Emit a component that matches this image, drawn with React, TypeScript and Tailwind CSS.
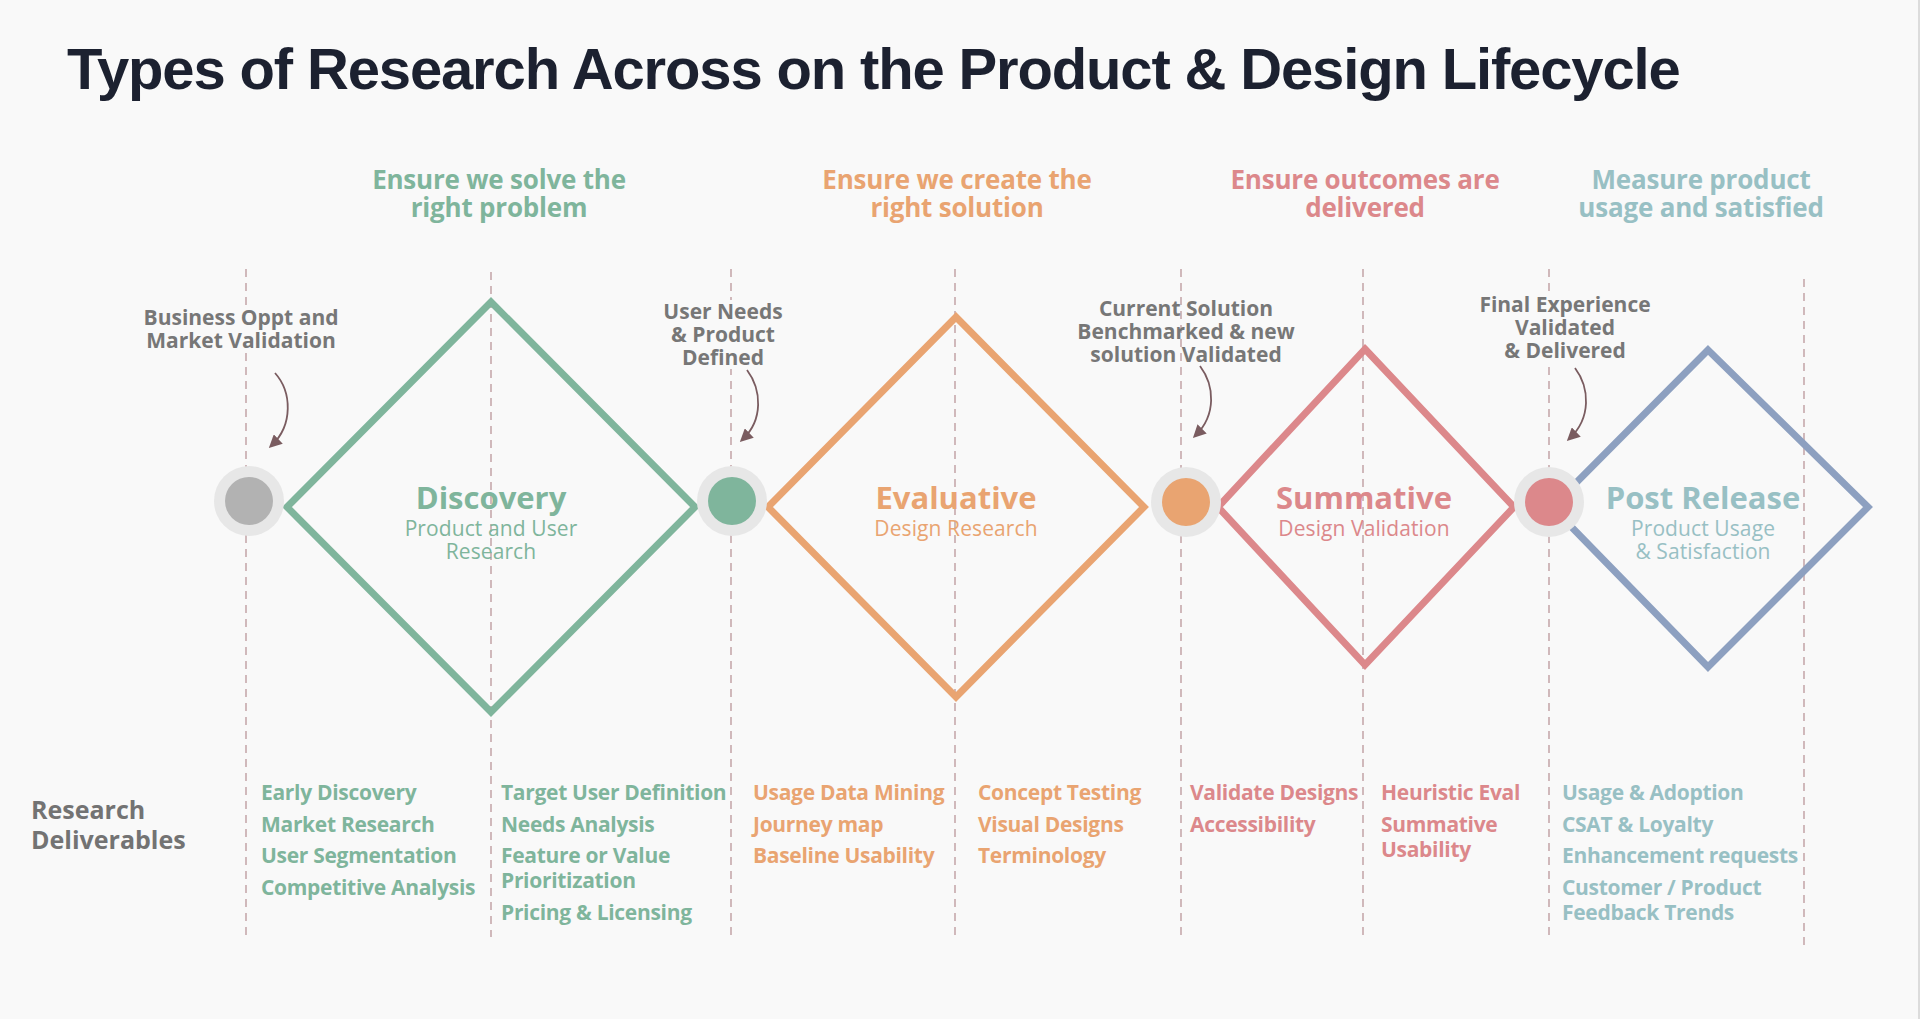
import React from "react";

const OFF = 98;

type Tone = "green" | "orange" | "pink" | "teal";

const toneText: Record<Tone, string> = {
  green: "text-[#7fb59c]",
  orange: "text-[#e9a471]",
  pink: "text-[#dc888b]",
  teal: "text-[#98c0c4]",
};

const headings: { cx: number; lines: string[]; tone: Tone }[] = [
  { cx: 499, lines: ["Ensure we solve the", "right problem"], tone: "green" },
  { cx: 957, lines: ["Ensure we create the", "right solution"], tone: "orange" },
  { cx: 1365, lines: ["Ensure outcomes are", "delivered"], tone: "pink" },
  { cx: 1701, lines: ["Measure product", "usage and satisfied"], tone: "teal" },
];

const milestones: { cx: number; top: number; lines: string[]; bg: boolean }[] = [
  { cx: 241, top: 306, lines: ["Business Oppt and", "Market Validation"], bg: true },
  { cx: 723, top: 300, lines: ["User Needs", "& Product", "Defined"], bg: true },
  { cx: 1186, top: 297, lines: ["Current Solution", "Benchmarked & new", "solution Validated"], bg: false },
  { cx: 1565, top: 293, lines: ["Final Experience", "Validated", "& Delivered"], bg: true },
];

const phases: { cx: number; title: string; sub: string[]; tone: Tone }[] = [
  { cx: 491, title: "Discovery", sub: ["Product and User", "Research"], tone: "green" },
  { cx: 956, title: "Evaluative", sub: ["Design Research"], tone: "orange" },
  { cx: 1364, title: "Summative", sub: ["Design Validation"], tone: "pink" },
  { cx: 1703, title: "Post Release", sub: ["Product Usage", "& Satisfaction"], tone: "teal" },
];

const dashed = [
  { x: 246, y1: 269, y2: 937 },
  { x: 491, y1: 272, y2: 937 },
  { x: 731, y1: 269, y2: 937 },
  { x: 955, y1: 269, y2: 937 },
  { x: 1181, y1: 269, y2: 937 },
  { x: 1363, y1: 269, y2: 937 },
  { x: 1549, y1: 269, y2: 937 },
  { x: 1804, y1: 279, y2: 945 },
];

const diamonds = [
  { pts: "491,302 695,507 491,712 287,507", color: "#7fb59c" },
  { pts: "956,317 1144,507 956,697 768,507", color: "#e9a471" },
  { pts: "1365,349 1514,507 1365,665 1218,507", color: "#dc888b" },
  { pts: "1708,350 1868,507 1708,667 1552,507", color: "#8da0c0" },
];

const circles = [
  { cx: 249, cy: 501, fill: "#b2b2b2" },
  { cx: 732, cy: 501, fill: "#7fb59c" },
  { cx: 1186, cy: 502, fill: "#e9a471" },
  { cx: 1549, cy: 502, fill: "#dc888b" },
];

const arrows = [
  "M275 373 C292 392 293 425 272 445",
  "M747 370 C762 390 763 420 743 439",
  "M1200 366 C1215 386 1216 415 1196 435",
  "M1575 368 C1590 388 1591 418 1570 438",
];

const columns: { w: string; tone: Tone; items: string[][] }[] = [
  {
    w: "w-[240px]",
    tone: "green",
    items: [["Early Discovery"], ["Market Research"], ["User Segmentation"], ["Competitive Analysis"]],
  },
  {
    w: "w-[252px]",
    tone: "green",
    items: [["Target User Definition"], ["Needs Analysis"], ["Feature or Value", "Prioritization"], ["Pricing & Licensing"]],
  },
  {
    w: "w-[225px]",
    tone: "orange",
    items: [["Usage Data Mining"], ["Journey map"], ["Baseline Usability"]],
  },
  {
    w: "w-[212px]",
    tone: "orange",
    items: [["Concept Testing"], ["Visual Designs"], ["Terminology"]],
  },
  {
    w: "w-[191px]",
    tone: "pink",
    items: [["Validate Designs"], ["Accessibility"]],
  },
  {
    w: "w-[181px]",
    tone: "pink",
    items: [["Heuristic Eval"], ["Summative", "Usability"]],
  },
  {
    w: "flex-1",
    tone: "teal",
    items: [["Usage & Adoption"], ["CSAT & Loyalty"], ["Enhancement requests"], ["Customer / Product", "Feedback Trends"]],
  },
];

function Diagram() {
  return (
    <svg
      className="absolute left-0 top-0 pointer-events-none"
      width={1918}
      height={921}
      viewBox={`0 ${OFF} 1918 921`}
    >
      <defs>
        <marker
          id="ah"
          viewBox="0 0 12 12"
          refX="8"
          refY="6"
          markerWidth="13"
          markerHeight="13"
          markerUnits="userSpaceOnUse"
          orient="auto"
        >
          <path d="M0,0 L12,6 L0,12 Z" fill="#7a5c60" />
        </marker>
      </defs>
      {dashed.map((l) => (
        <line
          key={l.x}
          x1={l.x}
          x2={l.x}
          y1={l.y1}
          y2={l.y2}
          stroke="#c6a9ac"
          strokeWidth={1.6}
          strokeDasharray="8 6"
        />
      ))}
      {diamonds.map((d) => (
        <polygon
          key={d.pts}
          points={d.pts}
          fill="none"
          stroke={d.color}
          strokeWidth={7}
          strokeLinejoin="miter"
        />
      ))}
      {circles.map((c) => (
        <g key={c.cx}>
          <circle cx={c.cx} cy={c.cy} r={35} fill="#e7e7e7" />
          <circle cx={c.cx} cy={c.cy} r={24} fill={c.fill} />
        </g>
      ))}
      {arrows.map((d) => (
        <path key={d} d={d} fill="none" stroke="#7a5c60" strokeWidth={1.8} markerEnd="url(#ah)" />
      ))}
    </svg>
  );
}

export default function App() {
  return (
    <div className="relative w-[1920px] h-[1019px] overflow-hidden bg-[#f9f9f9] border-r-2 border-[#dcdcdc]">
      <h1 className="pl-[67px] pt-[40px] font-['Liberation_Sans',Arial,sans-serif] text-[58px] leading-[58px] font-bold tracking-[-1.15px] text-[#1c2130] whitespace-nowrap">
        Types of Research Across on the Product &amp; Design Lifecycle
      </h1>

      <div className="relative h-[921px] font-['Open_Sans',sans-serif]">
        <Diagram />

        <div className="relative h-[682px]">
          {headings.map((h) => (
            <div
              key={h.cx}
              className={`absolute -translate-x-1/2 text-center whitespace-nowrap text-[26px] leading-[28px] font-bold tracking-[-0.2px] ${toneText[h.tone]}`}
              style={{ left: h.cx, top: 165 - OFF }}
            >
              {h.lines.map((l) => (
                <div key={l}>{l}</div>
              ))}
            </div>
          ))}

          {milestones.map((m) => (
            <div
              key={m.cx}
              className={`absolute -translate-x-1/2 text-center whitespace-nowrap text-[21px] leading-[23px] font-bold text-[#777777] ${
                m.bg ? "bg-[#f9f9f9]" : ""
              }`}
              style={{ left: m.cx, top: m.top - OFF }}
            >
              {m.lines.map((l) => (
                <div key={l}>{l}</div>
              ))}
            </div>
          ))}

          {phases.map((p) => (
            <div
              key={p.cx}
              className={`absolute -translate-x-1/2 text-center whitespace-nowrap ${toneText[p.tone]}`}
              style={{ left: p.cx, top: 480 - OFF }}
            >
              <div className="text-[31px] leading-[35px] font-bold">{p.title}</div>
              <div className="mt-[2px] text-[21px] leading-[23px] font-normal tracking-[0.1px]">
                {p.sub.map((l) => (
                  <div key={l}>{l}</div>
                ))}
              </div>
            </div>
          ))}
        </div>

        <div className="relative flex pl-[31px]">
          <div className="w-[230px] mt-[14px] text-[25px] leading-[30px] font-bold text-[#737373]">
            <div>Research</div>
            <div>Deliverables</div>
          </div>
          {columns.map((c, i) => (
            <div key={i} className={`${c.w} flex flex-col gap-[6.5px] ${toneText[c.tone]}`}>
              {c.items.map((it) => (
                <div
                  key={it.join()}
                  className="text-[21px] leading-[25px] font-bold tracking-[-0.3px] whitespace-nowrap"
                >
                  {it.map((l) => (
                    <div key={l}>{l}</div>
                  ))}
                </div>
              ))}
            </div>
          ))}
        </div>
      </div>
    </div>
  );
}
